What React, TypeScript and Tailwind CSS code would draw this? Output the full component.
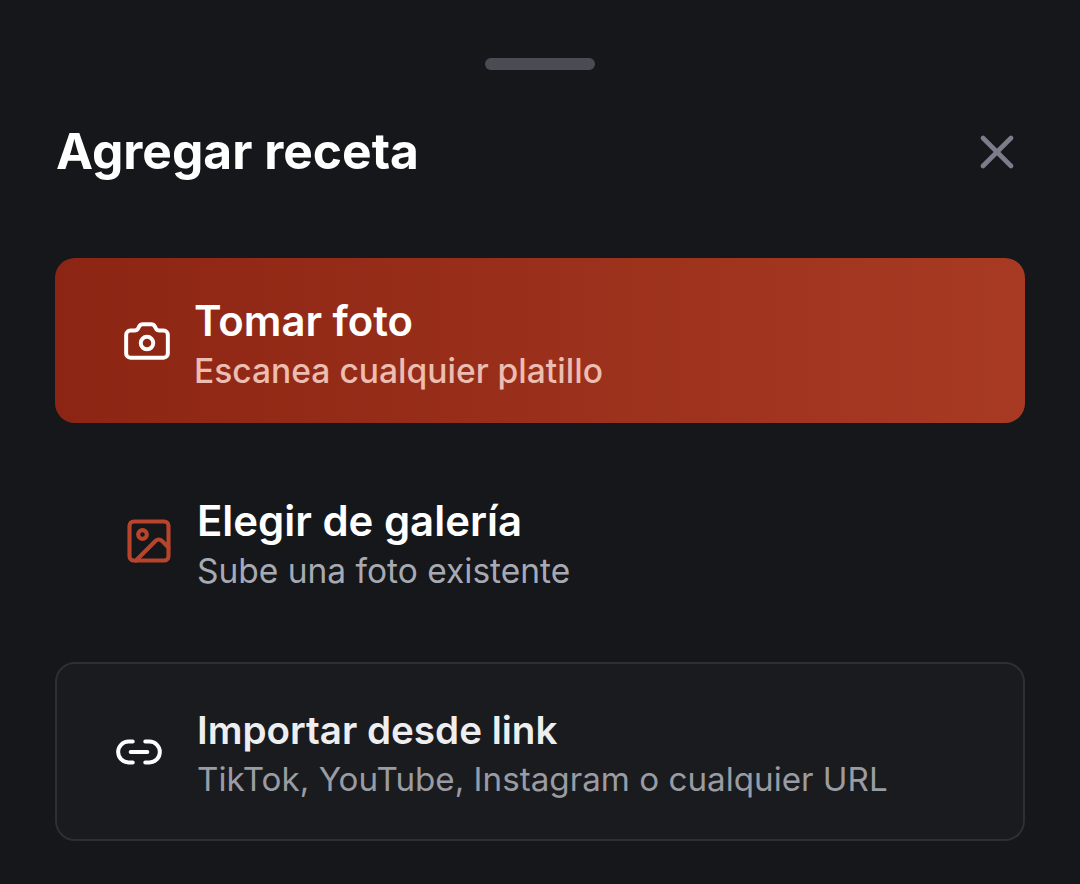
import React from "react";
import { Camera, Image, Link2, X } from "lucide-react";

const App = () => {
	return (
		<div className="h-[884px] w-[1080px] overflow-hidden bg-[#15171b] font-['Inter',sans-serif] text-white">
			<div className="flex justify-center pt-[58px]">
				<div className="h-3 w-[110px] rounded-full bg-[#4b4c53]" />
			</div>

			<div className="mt-[48px] flex h-[68px] items-center justify-between pl-[56px] pr-[55px]">
				<h1 className="text-[49.7px] font-bold leading-none">Agregar receta</h1>
				<X size={56} strokeWidth={2} className="text-[#7b7e8a]" />
			</div>

			<div className="mt-[72px] flex flex-col px-[55px]">
				<button className="flex h-[165px] items-center rounded-[20px] bg-gradient-to-r from-[#8c2513] to-[#a83a23] pl-[67px] text-left">
					<Camera size={50} strokeWidth={1.9} className="mr-[22px] shrink-0 text-white" />
					<div className="pt-[10px]">
						<div className="text-[41.8px] font-semibold leading-[50px]">Tomar foto</div>
						<div className="text-[33.6px] font-medium leading-[50px] text-[#ecbdb0]">
							Escanea cualquier platillo
						</div>
					</div>
				</button>

				<button className="mt-[68px] flex h-[100px] items-center pl-[68px] text-left">
					<Image size={52} strokeWidth={1.9} className="mr-[22px] shrink-0 text-[#b8442c]" />
					<div className="pt-[11px]">
						<div className="text-[41.9px] font-semibold leading-[50px]">Elegir de galería</div>
						<div className="text-[33.5px] leading-[51px] text-[#a7aab3]">Sube una foto existente</div>
					</div>
				</button>

				<button className="mt-[71px] flex h-[179px] items-center rounded-[20px] border-2 border-[#2d2f35] bg-[#1a1b1f] pl-[57px] text-left">
					<Link2 size={50} strokeWidth={1.9} className="mr-[33px] shrink-0 text-white" />
					<div className="pt-[7px]">
						<div className="text-[38.6px] font-semibold leading-[48px] text-[#eeeef0]">Importar desde link</div>
						<div className="text-[33.2px] leading-[50px] text-[#9a9ca3]">
							TikTok, YouTube, Instagram o cualquier URL
						</div>
					</div>
				</button>
			</div>
		</div>
	);
};

export default App;
